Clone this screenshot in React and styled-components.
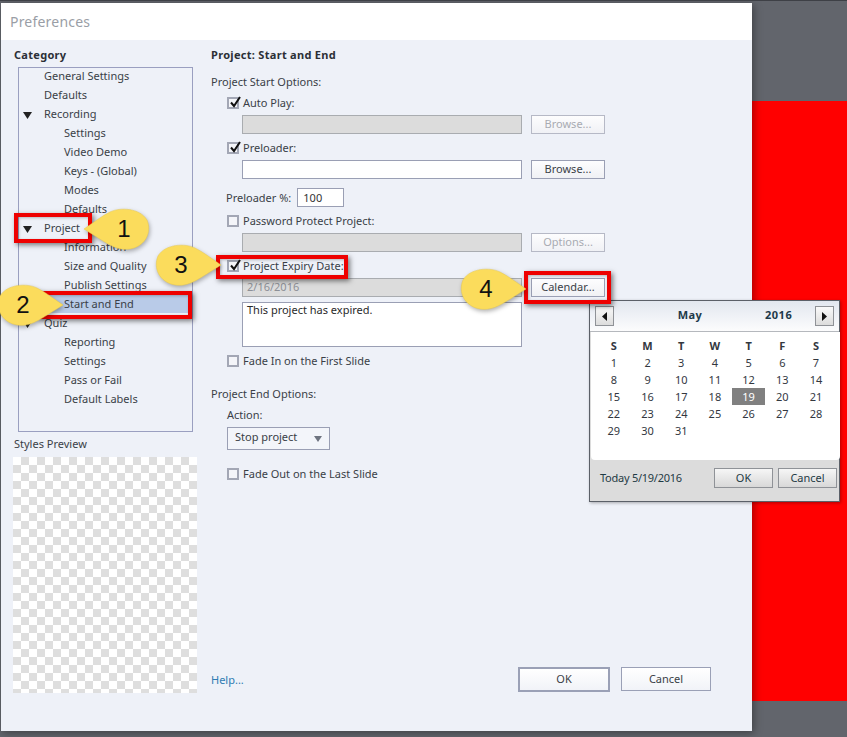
import React from "react";
import styled, { createGlobalStyle } from "styled-components";

const Global = createGlobalStyle`
  html, body { margin: 0; padding: 0; height: 737px; overflow: hidden; background: #62656c; }
  * { box-sizing: border-box; }
  body { font-family: "Noto Sans", "Open Sans", sans-serif; font-size: 11px; color: #3a3f47; }
`;

const Page = styled.div`
  position: relative; width: 847px; height: 737px; overflow: hidden;
  display: flex; align-items: flex-start; padding: 3px 0 0 1px;
  background: #62656c; border-top: 1px solid #3e4046; 
`;
const Dialog = styled.div`
  width: 751px; height: 728px; margin-top: -1px; flex: none; display: flex; flex-direction: column;
  background: #eef1f8; box-shadow: 2px 2px 8px rgba(0,0,0,.35); position: relative; z-index: 1;
`;
const RedBlock = styled.div`
  flex: 1; height: 600px; margin-top: 97px; background: #ff0000;
`;
const TitleBar = styled.div`
  height: 37px; flex: none; background: #fff; display: flex; align-items: center;
  padding-left: 9px; font-size: 14px; color: #9a9ea6; letter-spacing: .2px;
`;
const Body = styled.div`flex: 1; display: flex; min-height: 0; padding-bottom: 40px;`;
const Left = styled.div`width: 210px; flex: none; padding: 8px 0 0 12px; display: flex; flex-direction: column;`;
const Bold = styled.div`font-weight: 700; font-size: 11px; line-height: 14px; color: #2b2f36; letter-spacing: .3px; margin-left: ${p => p.$ml || 0}px;`;
const Tree = styled.div`
  width: 175px; height: 365px; margin: 5px 0 0 5px; border: 1px solid #9a9fc0; flex: none;
  & > :first-child { margin-top: -2px; }
`;
const Row = styled.div`
  height: 19px; display: flex; align-items: center; position: relative;
  padding-left: ${p => (p.$level ? 45 : 25)}px;
  background: ${p => (p.$selected ? "#b9cbe8" : "transparent")};
  color: #3a3f47; line-height: 19px;
`;
const Expander = styled.svg`position: absolute; left: 4px; top: 8px; width: 9px; height: 7px; fill: #222;`;
const PreviewLabel = styled.div`margin-top: 5px; line-height: 14px; color: #3a3f47; margin-left: 1px;`;
const Checker = styled.div`
  width: 184px; height: 236px; margin-top: 6px; flex: none;
  background: repeating-conic-gradient(#dedede 0 25%, #fff 0 50%) 0 0 / 16px 16px;
`;
const Right = styled.div`flex: 1; display: flex; flex-direction: column; padding: 8px 41px 0 0;`;
const Label = styled.div`
  line-height: 14px; margin-top: ${p => p.$mt || 0}px;
  margin-left: ${p => p.$ml || 0}px; color: #3a3f47;
`;
const CheckRow = styled.div`
  display: flex; align-items: center; gap: 4px; height: 14px; margin-top: ${p => p.$mt || 7}px;
  margin-left: 16px; color: #3a3f47; line-height: 12px;
`;
const Box = styled.span`
  width: 12px; height: 12px; border: 2px solid #a3a7b5; background: #f4f5f9; position: relative; flex: none;
  svg { position: absolute; left: 0; top: -3px; width: 13px; height: 12px; }
`;
const FieldRow = styled.div`display: flex; margin: 5px 0 0 31px; gap: 9px; align-items: flex-start;`;
const Field = styled.div`
  width: 280px; height: 19px; border: 1px solid ${p => (p.$disabled ? "#a9acb0" : "#9a9fb4")};
  background: ${p => (p.$disabled ? "#dcdcdc" : "#fff")}; padding-left: 4px; line-height: 15px;
  color: ${p => (p.$disabled ? "#8d9097" : "#333")};
`;
const TextArea = styled(Field)`height: 45px; margin: 5px 0 0 31px; line-height: 14px; color: #2a2a2a;`;
const Btn = styled.div`
  width: 74px; height: 19px; border: 1px solid ${p => (p.$disabled ? "#b6b9c6" : "#9a9fb4")};
  background: linear-gradient(#fdfdfe, #f0f1f5); display: flex; align-items: center; justify-content: center;
  color: ${p => (p.$disabled ? "#a8abb2" : "#3a3f47")}; line-height: 15px; padding-bottom: 3px;
`;
const PctRow = styled.div`display: flex; align-items: center; gap: 6px; margin: 9px 0 0 15px; height: 19px;`;
const PctInput = styled.div`width: 47px; height: 19px; border: 1px solid #9a9fb4; background: #fff; padding-left: 5px; line-height: 17px; color: #333;`;
const Select = styled.div`
  width: 103px; height: 23px; margin: 5px 0 0 16px; border: 1px solid #9a9fb4; background: #f3f5fa;
  display: flex; align-items: center; justify-content: space-between; padding: 0 7px 5px 7px;
  svg { width: 8px; height: 6px; fill: #6e7480; margin-top: 5px; }
`;
const Footer = styled.div`margin-top: auto; display: flex; align-items: center; height: 24px;`;
const Help = styled.div`color: #2f7cb3; margin-right: auto;`;
const DlgBtn = styled.div`
  width: ${p => (p.$primary ? 92 : 90)}px; height: ${p => (p.$primary ? 25 : 24)}px;
  margin-left: ${p => (p.$primary ? 0 : 11)}px;
  border: ${p => (p.$primary ? 2 : 1)}px solid #9aa0b6; background: linear-gradient(#fff, #f1f3f8);
  display: flex; align-items: center; justify-content: center; color: #3a3f47; padding-bottom: 1px;
`;
const Highlight = styled.div`
  position: absolute; z-index: 3; left: ${p => p.$x}px; top: ${p => p.$y}px; width: ${p => p.$w}px; height: ${p => p.$h}px;
  border: 4px solid #ee0000; box-shadow: 2px 2px 5px rgba(0,0,0,.5), inset 1px 1px 3px rgba(0,0,0,.25);
`;
const Callout = styled.div`
  position: absolute; z-index: 4; left: ${p => p.$x}px; top: ${p => p.$y}px; width: 66px; height: 44px;
  svg { position: absolute; inset: 0; width: 66px; height: 44px; overflow: visible; }
  span {
    position: absolute; top: 5px; width: 52px; text-align: center; left: ${p => (p.$flip ? 14 : 0)}px;
    font: 24px/32px "Liberation Sans", sans-serif; color: #111;
  }
`;
const Calendar = styled.div`
  position: absolute; z-index: 2; left: 589px; top: 299px; width: 251px; height: 202px;
  border: 1px solid #5b6068; background: #dcdcdc; display: flex; flex-direction: column;
  box-shadow: 1px 1px 3px rgba(0,0,0,.3);
`;
const CalHead = styled.div`
  height: 31px; flex: none; background: linear-gradient(#e2e7ef, #fcfcfd); border-bottom: 1px solid #b5b8bd;
  display: flex; align-items: center; padding: 0 5px; font-weight: 700; color: #1d3a4a; letter-spacing: .5px;
`;
const NavBtn = styled.div`
  width: 19px; height: 20px; border: 1px solid #8f9297; background: linear-gradient(#fafafa, #dcdcdc);
  display: flex; align-items: center; justify-content: center;
  svg { width: 5px; height: 9px; fill: #111; }
`;
const Month = styled.div`margin: 0 0 4px 53px; width: 46px; text-align: center;`;
const Year = styled.div`margin: 0 auto 4px 52px;`;
const CalGrid = styled.div`
  height: 128px; flex: none; background: #fff; border-radius: 0 0 4px 4px; padding: 5px 6px 0;
  display: grid; grid-template-columns: repeat(7, 33.7px); grid-auto-rows: 17px; align-content: start;
  margin: 0 1px; width: 249px;
`;
const Day = styled.div`
  display: flex; align-items: center; justify-content: center;
  font-weight: ${p => (p.$head ? 700 : 400)}; color: ${p => (p.$sel ? "#fff" : "#33383f")};
  background: ${p => (p.$sel ? "#808080" : "transparent")};
`;
const CalFoot = styled.div`flex: 1; display: flex; align-items: center; padding: 0 2px 6px 10px; gap: 5px; color: #1f3a44;`;
const Today = styled.div`margin-right: auto; letter-spacing: -.25px;`;
const CalBtn = styled.div`
  width: 59px; height: 20px; border: 1px solid #8f9297; background: linear-gradient(#f6f6f6, #d8d8d8);
  display: flex; align-items: center; justify-content: center; color: #1f3a44; padding-bottom: 1px;
`;

const Tri = () => <Expander viewBox="0 0 9 7"><path d="M0 0h9L4.5 7z" /></Expander>;
const Check = ({ on, children, mt }) => (
  <CheckRow $mt={mt}>
    <Box>{on && <svg viewBox="0 0 13 12"><path d="M2 6.5 5 10 11 1" fill="none" stroke="#111" strokeWidth="2" /></svg>}</Box>
    {children}
  </CheckRow>
);
const Bubble = ({ x, y, n, flip }) => (
  <Callout $x={x} $y={y} $flip={flip}>
    <svg viewBox="0 0 66 44">
      <path
        d={flip
          ? "M0 21 C10 14 18 8 26 4 C36 -1 56 0 63 12 C68 24 62 38 46 41 C32 43 24 36 0 21Z"
          : "M66 21 C56 14 48 8 40 4 C30 -1 10 0 3 12 C-2 24 4 38 20 41 C34 43 42 36 66 21Z"}
        fill="#fbdc5c" stroke="#e9c84a" strokeWidth=".5"
        style={{ filter: "drop-shadow(1px 2px 2px rgba(0,0,0,.3))" }}
      />
    </svg>
    <span>{n}</span>
  </Callout>
);

const tree = [
  ["General Settings", 0], ["Defaults", 0], ["Recording", 0, 1], ["Settings", 1], ["Video Demo", 1],
  ["Keys - (Global)", 1], ["Modes", 1], ["Defaults", 1], ["Project", 0, 1], ["Information", 1],
  ["Size and Quality", 1], ["Publish Settings", 1], ["Start and End", 1, 0, 1], ["Quiz", 0, 1],
  ["Reporting", 1], ["Settings", 1], ["Pass or Fail", 1], ["Default Labels", 1],
];
const heads = ["S", "M", "T", "W", "T", "F", "S"];
const days = Array.from({ length: 31 }, (_, i) => i + 1);

export default function App() {
  return (
    <Page>
      <Global />
      <Dialog>
        <TitleBar>Preferences</TitleBar>
        <Body>
          <Left>
            <Bold $ml={1}>Category</Bold>
            <Tree>
              {tree.map(([t, level, exp, sel], i) => (
                <Row key={i} $level={level} $selected={sel}>{exp ? <Tri /> : null}{t}</Row>
              ))}
            </Tree>
            <PreviewLabel>Styles Preview</PreviewLabel>
            <Checker />
          </Left>
          <Right>
            <Bold>Project: Start and End</Bold>
            <Label $mt={13}>Project Start Options:</Label>
            <Check on>Auto Play:</Check>
            <FieldRow><Field $disabled /><Btn $disabled>Browse...</Btn></FieldRow>
            <Check on>Preloader:</Check>
            <FieldRow><Field /><Btn>Browse...</Btn></FieldRow>
            <PctRow>Preloader %:<PctInput>100</PctInput></PctRow>
            <Check>Password Protect Project:</Check>
            <FieldRow><Field $disabled /><Btn $disabled>Options...</Btn></FieldRow>
            <Check on>Project Expiry Date:</Check>
            <FieldRow><Field $disabled>2/16/2016</Field><Btn>Calendar...</Btn></FieldRow>
            <TextArea>This project has expired.</TextArea>
            <Check>Fade In on the First Slide</Check>
            <Label $mt={19}>Project End Options:</Label>
            <Label $mt={7} $ml={16}>Action:</Label>
            <Select>Stop project<svg viewBox="0 0 8 6"><path d="M0 0h8L4 6z" /></svg></Select>
            <Check mt={17}>Fade Out on the Last Slide</Check>
            <Footer>
              <Help>Help...</Help>
              <DlgBtn $primary>OK</DlgBtn>
              <DlgBtn>Cancel</DlgBtn>
            </Footer>
          </Right>
        </Body>
      </Dialog>
      <RedBlock />
      <Calendar>
        <CalHead>
          <NavBtn><svg viewBox="0 0 5 9"><path d="M5 0v9L0 4.5z" /></svg></NavBtn>
          <Month>May</Month>
          <Year>2016</Year>
          <NavBtn><svg viewBox="0 0 5 9"><path d="M0 0v9l5-4.5z" /></svg></NavBtn>
        </CalHead>
        <CalGrid>
          {heads.map((d, i) => <Day key={i} $head>{d}</Day>)}
          {days.map(d => <Day key={d} $sel={d === 19}>{d}</Day>)}
        </CalGrid>
        <CalFoot>
          <Today>Today 5/19/2016</Today>
          <CalBtn>OK</CalBtn>
          <CalBtn>Cancel</CalBtn>
        </CalFoot>
      </Calendar>
      <Highlight $x={14} $y={212} $w={78} $h={30} />
      <Highlight $x={38} $y={290} $w={154} $h={28} />
      <Highlight $x={216} $y={254} $w={132} $h={24} />
      <Highlight $x={524} $y={270} $w={87} $h={33} />
      <Bubble x={84} y={207} n="1" flip />
      <Bubble x={-3} y={283} n="2" />
      <Bubble x={155} y={243} n="3" />
      <Bubble x={460} y={267} n="4" />
    </Page>
  );
}
